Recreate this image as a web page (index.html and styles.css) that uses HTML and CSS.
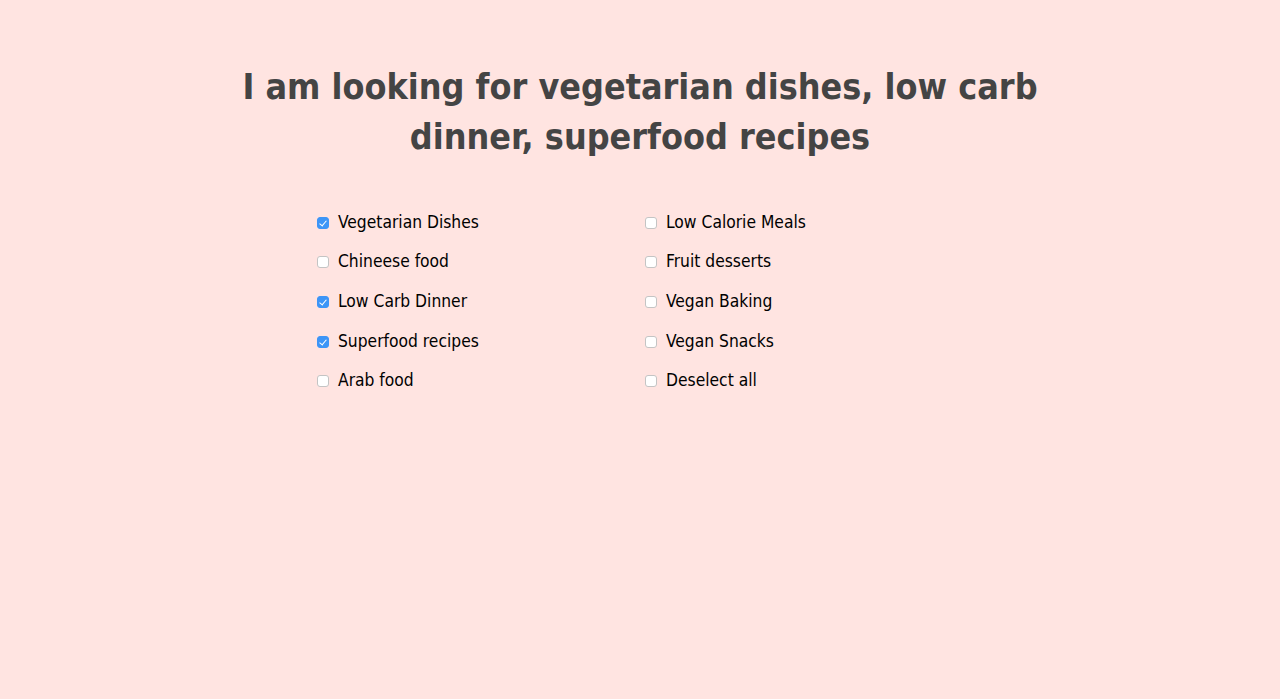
FILE: index.html
```html
<!DOCTYPE html>
<html>
<head>
<meta charset="utf-8">
<link rel="stylesheet" href="styles.css">
</head>
<body>
<main class="page">
  <h1 class="title">I am looking for vegetarian dishes, low carb dinner, superfood recipes</h1>
  <div class="options">
    <label class="option"><input type="checkbox" checked><span>Vegetarian Dishes</span></label>
    <label class="option"><input type="checkbox"><span>Low Calorie Meals</span></label>
    <label class="option"><input type="checkbox"><span>Chineese food</span></label>
    <label class="option"><input type="checkbox"><span>Fruit desserts</span></label>
    <label class="option"><input type="checkbox" checked><span>Low Carb Dinner</span></label>
    <label class="option"><input type="checkbox"><span>Vegan Baking</span></label>
    <label class="option"><input type="checkbox" checked><span>Superfood recipes</span></label>
    <label class="option"><input type="checkbox"><span>Vegan Snacks</span></label>
    <label class="option"><input type="checkbox"><span>Arab food</span></label>
    <label class="option"><input type="checkbox"><span>Deselect all</span></label>
  </div>
</main>
</body>
</html>
```
FILE: styles.css
```css
html, body {
  margin: 0;
  padding: 0;
  background: #ffe4e1;
  height: 100%;
}
body {
  font-family: "DejaVu Sans Condensed", "DejaVu Sans", sans-serif;
}
.page {
  display: flex;
  flex-direction: column;
  align-items: center;
  padding-top: 62px;
}
.title {
  margin: 0;
  width: 820px;
  text-align: center;
  font-size: 35.6px;
  line-height: 50px;
  font-weight: bold;
  color: #444444;
}
.options {
  margin-top: 40px;
  width: 646px;
  display: grid;
  grid-template-columns: 328px 318px;
}
.option {
  display: flex;
  align-items: center;
  height: 39.6px;
  font-size: 17.3px;
  color: #000;
}
.option input {
  appearance: none;
  -webkit-appearance: none;
  position: relative;
  box-sizing: border-box;
  width: 12px;
  height: 12px;
  margin: 2px 9px 0 0;
  border: 1px solid #c4c4c4;
  border-radius: 3px;
  background: #ffffff;
  flex: none;
}
.option input:checked {
  background: #3d95f7;
  border-color: #3d95f7;
}
.option input:checked::after {
  content: "";
  position: absolute;
  left: 3px;
  top: 1px;
  width: 3px;
  height: 6px;
  border: solid #ffffff;
  border-width: 0 1.5px 1.5px 0;
  transform: rotate(40deg);
}
```
